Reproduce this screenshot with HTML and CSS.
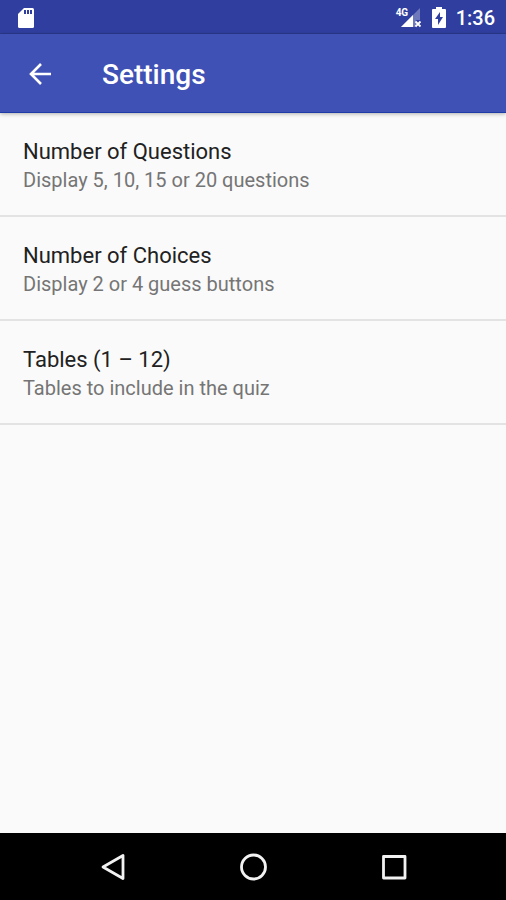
FILE: index.html
```html
<!DOCTYPE html>
<html lang="en">
<head>
  <meta charset="UTF-8">
  <meta name="viewport" content="width=device-width, initial-scale=1">
  <title>Settings</title>
  <link rel="stylesheet" href="styles.css">
</head>
<body>

<!-- Status bar -->
<div class="status-bar">
  <svg class="sd-icon" width="18" height="22" viewBox="0 0 18 22" aria-hidden="true">
    <path d="M7 1h8.500a1.500 1.500 0 0 1 1.500 1.500v17a1.500 1.500 0 0 1-1.500 1.500h-13a1.500 1.500 0 0 1-1.500-1.500V7z" fill="#fff"/>
    <path d="M7 3h2v4H7zM10 3h2v4h-2zM13 3h2v4h-2z" fill="#303f9f"/>
  </svg>
  <div class="status-right">
    <div class="signal">
      <span class="network">4G</span>
      <svg width="22" height="20" viewBox="0 0 22 20" aria-hidden="true">
        <path d="M20 0v12h-4v7H1z" fill="#fff" fill-opacity=".3"/>
        <path d="M13 7v12H1z" fill="#fff"/>
        <path d="M15.500 13.500l5 5M20.500 13.500l-5 5" stroke="#fff" stroke-width="1.800"/>
      </svg>
    </div>
    <svg class="battery" width="14" height="22" viewBox="0 0 14 22" aria-hidden="true">
      <path d="M4 0h6v2h3a1 1 0 0 1 1 1v17a1 1 0 0 1-1 1H1a1 1 0 0 1-1-1V3a1 1 0 0 1 1-1h3z" fill="#fff"/>
      <path d="M8 5l-5 7h3v6l5-8H8z" fill="#303f9f"/>
    </svg>
    <span class="clock">1:36</span>
  </div>
</div>

<!-- App bar -->
<header class="app-bar">
  <button class="back" type="button" aria-label="Back">
    <svg width="24" height="24" viewBox="0 0 24 24" fill="none" stroke="#fff" stroke-width="2.600" aria-hidden="true">
      <path d="M23 12H3M13 2L3 12l10 10"/>
    </svg>
  </button>
  <h1>Settings</h1>
</header>

<!-- Preferences -->
<main>
  <ul class="prefs">
    <li>
      <button class="pref" type="button">
        <span class="pref-title">Number of Questions</span>
        <span class="pref-summary">Display 5, 10, 15 or 20 questions</span>
      </button>
    </li>
    <li>
      <button class="pref" type="button">
        <span class="pref-title">Number of Choices</span>
        <span class="pref-summary">Display 2 or 4 guess buttons</span>
      </button>
    </li>
    <li>
      <button class="pref" type="button">
        <span class="pref-title">Tables (1 – 12)</span>
        <span class="pref-summary">Tables to include in the quiz</span>
      </button>
    </li>
  </ul>
</main>

<!-- Navigation bar -->
<nav class="nav-bar">
  <button type="button" aria-label="Back">
    <svg width="28" height="28" viewBox="0 0 28 28" fill="none" stroke="#f2f2f2" stroke-width="2.800" stroke-linejoin="round" aria-hidden="true">
      <path d="M25 2.500v23L5 14z"/>
    </svg>
  </button>
  <button type="button" aria-label="Home">
    <svg width="28" height="28" viewBox="0 0 28 28" fill="none" stroke="#f2f2f2" stroke-width="2.800" aria-hidden="true">
      <circle cx="14.500" cy="14" r="12"/>
    </svg>
  </button>
  <button type="button" aria-label="Recent apps">
    <svg width="28" height="28" viewBox="0 0 28 28" fill="none" stroke="#f2f2f2" stroke-width="2.800" stroke-linejoin="round" aria-hidden="true">
      <path d="M3.500 3.500h21.500v21.500h-21.500z"/>
    </svg>
  </button>
</nav>

</body>
</html>
```
FILE: styles.css
```css
* {
  box-sizing: border-box;
}
body {
  margin: 0;
  min-height: 100vh;
  display: flex;
  flex-direction: column;
  background-color: #fafafa;
  font-family: Roboto, sans-serif;
}
button {
  margin: 0;
  padding: 0;
  border: 0;
  background: none;
  font: inherit;
  cursor: pointer;
}
svg {
  display: block;
}

/* Status bar */
.status-bar {
  display: flex;
  align-items: center;
  justify-content: space-between;
  height: 34px;
  padding: 2px 11px 0 17px;
  background-color: #303f9f;
  border-bottom: 1px solid #2b398f;
  color: #fff;
}
.status-right {
  display: flex;
  align-items: center;
}
.signal {
  position: relative;
  margin-right: 10px;
}
.network {
  position: absolute;
  top: 0;
  left: -4px;
  font-size: 10px;
  font-weight: 700;
  line-height: 10px;
}
.battery {
  margin-right: 10px;
}
.clock {
  font-size: 20px;
  font-weight: 500;
  line-height: 24px;
}

/* App bar */
.app-bar {
  position: relative;
  display: flex;
  align-items: center;
  height: 79px;
  padding: 2px 24px 0;
  background-color: #3f51b5;
  border-bottom: 1px solid #1f3ba6;
  box-shadow: 0 1px 4px rgba(0, 0, 0, 0.3);
  color: #fff;
}
.back {
  padding: 4px;
}
h1 {
  margin: 0 0 0 46px;
  padding-top: 2px;
  font-size: 28px;
  font-weight: 500;
  line-height: 32px;
}

/* Preferences */
main {
  flex: 1;
}
.prefs {
  margin: 0;
  padding: 0;
  list-style: none;
}
.prefs li {
  border-bottom: 2px solid #e3e3e3;
}
.pref {
  display: block;
  width: 100%;
  padding: 25px 23px 21px;
  text-align: left;
}
.pref-title,
.pref-summary {
  display: block;
  line-height: 28px;
}
.pref-title {
  font-size: 22px;
  color: #212121;
}
.pref-summary {
  font-size: 20px;
  color: #757575;
}

/* Navigation bar */
.nav-bar {
  display: flex;
  align-items: center;
  justify-content: center;
  gap: 85px;
  height: 67px;
  background-color: #000;
}
.nav-bar button {
  padding: 14px;
}
```
